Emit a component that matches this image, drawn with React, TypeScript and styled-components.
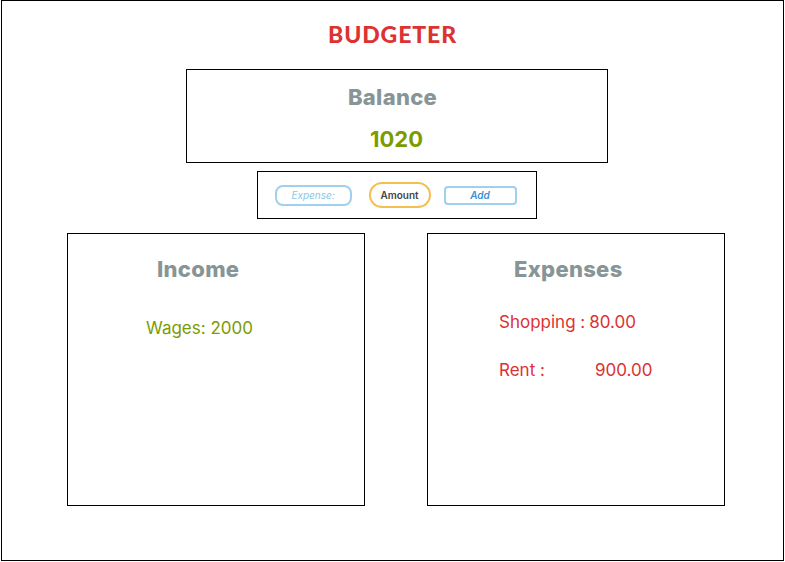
import React from 'react';
import styled, { createGlobalStyle } from 'styled-components';

const GlobalStyle = createGlobalStyle`
  html, body {
    margin: 0;
    padding: 0;
    background: #fff;
  }
  body {
    font-family: Inter, Lato, "Open Sans", sans-serif;
  }
`;

const Frame = styled.div`
  box-sizing: border-box;
  margin-left: 1px;
  width: 783px;
  height: 561px;
  border: 1px solid #000;
  display: flex;
  flex-direction: column;
  align-items: center;
`;

const Title = styled.h1`
  margin: 19px 0 0;
  font-family: Lato, sans-serif;
  font-size: 23px;
  font-weight: 900;
  color: #dc3232;
  letter-spacing: 0.9px;
  line-height: 28px;
`;

const BalanceBox = styled.div`
  box-sizing: border-box;
  margin-top: 21px;
  margin-left: 8px;
  width: 422px;
  height: 94px;
  border: 1px solid #000;
  display: flex;
  flex-direction: column;
  align-items: center;
`;

const Heading = styled.h2`
  margin: 0;
  font-size: 22px;
  font-weight: 800;
  color: #879597;
  line-height: 28px;
  letter-spacing: 0.3px;
`;

const BalanceTitle = styled(Heading)`
  margin: 13px 8px 0 0;
`;

const BalanceValue = styled.div`
  margin-top: 14px;
  font-size: 22px;
  font-weight: 700;
  color: #7b9c00;
  line-height: 28px;
`;

const InputBar = styled.form`
  box-sizing: border-box;
  margin-top: 8px;
  margin-left: 8px;
  width: 280px;
  height: 48px;
  border: 1px solid #000;
  display: flex;
  align-items: center;
  padding-left: 17px;
`;

const Field = styled.input<{ $tone: 'blue' | 'orange' }>`
  box-sizing: border-box;
  font-family: inherit;
  outline: none;
  background: #fff;
  padding: 0;
  text-align: center;
  ${({ $tone }) =>
    $tone === 'blue'
      ? `
    width: 77px;
    height: 21px;
    border: 2px solid #9fd0ee;
    border-radius: 8px;
    font-size: 10px;
    font-style: italic;
    color: #8cc6e8;
    &::placeholder { color: #8cc6e8; }
  `
      : `
    margin-left: 17px;
    width: 62px;
    height: 26px;
    border: 2px solid #f6bd4f;
    border-radius: 13px;
    font-size: 10px;
    font-weight: 600;
    color: #444;
    &::placeholder { color: #444; }
  `}
`;

const AddButton = styled.button`
  box-sizing: border-box;
  margin-left: 13px;
  width: 73px;
  height: 19px;
  border: 2px solid #9fd0ee;
  border-radius: 4px;
  background: #fff;
  font-family: inherit;
  font-size: 10px;
  font-weight: 600;
  font-style: italic;
  color: #3d8fd0;
  padding: 0;
  cursor: pointer;
`;

const Columns = styled.div`
  margin-top: 14px;
  width: 100%;
  box-sizing: border-box;
  padding-left: 65px;
  display: flex;
  gap: 62px;
`;

const Card = styled.section`
  box-sizing: border-box;
  width: 298px;
  height: 273px;
  border: 1px solid #000;
  padding-top: 21px;
`;

const CardHeading = styled(Heading)<{ $indent: number }>`
  padding-left: ${({ $indent }) => $indent}px;
`;

const List = styled.ul<{ $indent: number; $top: number }>`
  list-style: none;
  margin: ${({ $top }) => $top}px 0 0;
  padding: 0 0 0 ${({ $indent }) => $indent}px;
  display: flex;
  flex-direction: column;
  gap: 26px;
`;

const Item = styled.li<{ $tone: 'income' | 'expense' }>`
  font-size: 17px;
  line-height: 22px;
  color: ${({ $tone }) => ($tone === 'income' ? '#7b9c00' : '#dc3232')};
  display: flex;
`;

const Label = styled.span<{ $width?: number }>`
  display: inline-block;
  ${({ $width }) => ($width ? `width: ${$width}px;` : 'margin-right: 4px;')}
`;

const expenses = [
  { name: 'Shopping :', amount: '80.00', width: 0 },
  { name: 'Rent :', amount: '900.00', width: 96 },
];

export default function App() {
  return (
    <>
      <GlobalStyle />
      <Frame>
        <Title>BUDGETER</Title>
        <BalanceBox>
          <BalanceTitle>Balance</BalanceTitle>
          <BalanceValue>1020</BalanceValue>
        </BalanceBox>
        <InputBar onSubmit={(e) => e.preventDefault()}>
          <Field $tone="blue" placeholder="Expense:" />
          <Field $tone="orange" placeholder="Amount" />
          <AddButton type="submit">Add</AddButton>
        </InputBar>
        <Columns>
          <Card>
            <CardHeading $indent={89}>Income</CardHeading>
            <List $indent={78} $top={34}>
              <Item $tone="income">Wages: 2000</Item>
            </List>
          </Card>
          <Card>
            <CardHeading $indent={86}>Expenses</CardHeading>
            <List $indent={71} $top={28}>
              {expenses.map((e) => (
                <Item key={e.name} $tone="expense">
                  <Label $width={e.width || undefined}>{e.name}</Label>
                  {e.amount}
                </Item>
              ))}
            </List>
          </Card>
        </Columns>
      </Frame>
    </>
  );
}
